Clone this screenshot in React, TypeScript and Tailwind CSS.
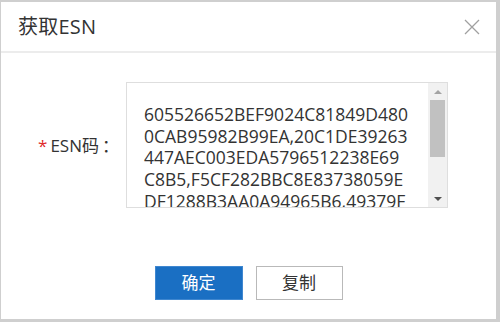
import React from 'react';

const lines = [
  '605526652BEF9024C81849D480',
  '0CAB95982B99EA,20C1DE39263',
  '447AEC003EDA5796512238E69',
  'C8B5,F5CF282BBC8E83738059E',
  'DF1288B3AA0A94965B6,49379F',
];

const font = { fontFamily: '"Open Sans", "Noto Sans CJK SC", sans-serif' };

export default function App() {
  return (
    <div
      className="w-[500px] h-[322px] bg-[#cfcfcf] pt-[2px] pl-px pr-[4px] pb-[3px]"
      style={font}
    >
      <div className="h-full bg-white flex flex-col">
        {/* header */}
        <div className="h-[51px] shrink-0 border-b-2 border-[#ececec] flex items-center justify-between pl-[17px] pr-[16px]">
          <span className="text-[20px] text-[#333] tracking-[0.2px]">获取ESN</span>
          <svg width="16" height="16" viewBox="0 0 16 16" className="text-[#a0a0a0]">
            <path d="M1 1 L15 15 M15 1 L1 15" stroke="currentColor" strokeWidth="1.3" fill="none" />
          </svg>
        </div>

        {/* body */}
        <div className="flex items-center pt-[29px] pl-[37px]">
          <label className="w-[88px] text-[17px] text-[#333] flex items-center pt-[2px]">
            <span className="text-[#e02a2a] mr-[3px]">*</span>
            ESN码<span className="ml-[3px]">：</span>
          </label>
          <div className="relative w-[322px] h-[126px] border border-[#dedede] flex overflow-hidden">
            <div className="flex-1 pl-[17px] pt-[21px] text-[17.5px] leading-[21.7px] text-[#333] overflow-hidden">
              {lines.map((l) => (
                <div key={l} className="whitespace-nowrap">{l}</div>
              ))}
            </div>
            {/* scrollbar */}
            <div className="w-[19px] h-full bg-[#f1f1f1] flex flex-col items-center">
              <div className="h-[17px] w-full flex items-center justify-center">
                <div className="w-0 h-0 border-l-[4px] border-r-[4px] border-b-[4px] border-l-transparent border-r-transparent border-b-[#a3a3a3]" />
              </div>
              <div className="w-[15px] h-[57px] bg-[#c1c1c1]" />
              <div className="flex-1" />
              <div className="h-[17px] w-full flex items-center justify-center">
                <div className="w-0 h-0 border-l-[4px] border-r-[4px] border-t-[4px] border-l-transparent border-r-transparent border-t-[#505050]" />
              </div>
            </div>
          </div>
        </div>

        {/* footer */}
        <div className="flex justify-center gap-[13px] pt-[58px]">
          <button className="w-[88px] h-[34px] bg-[#1a6fc3] border border-[#3f87d0] text-white text-[17px]">
            确定
          </button>
          <button className="w-[87px] h-[34px] bg-white border border-[#b9b9b9] text-[#333] text-[17px]">
            复制
          </button>
        </div>
      </div>
    </div>
  );
}
